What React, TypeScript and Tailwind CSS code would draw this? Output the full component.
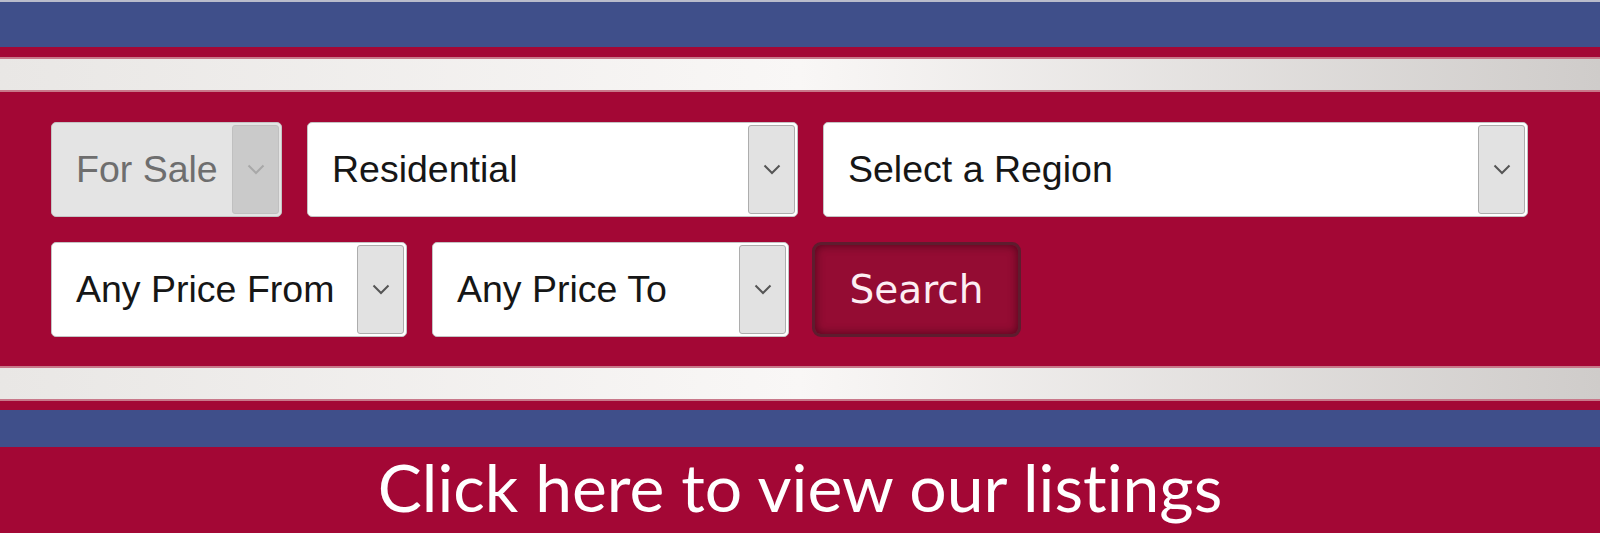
import React from "react";

function Chevron({ color = "#555" }: { color?: string }) {
  return (
    <svg width="18" height="11" viewBox="0 0 18 11" fill="none">
      <polyline points="1.5,1.5 9,9 16.5,1.5" stroke={color} strokeWidth="2" />
    </svg>
  );
}

function Stripe() {
  return (
    <div className="h-[35px] border-y-2 border-[#c8788a] bg-gradient-to-r from-[#e9e7e5] via-[#f9f7f6] to-[#cfccca]" />
  );
}

type SelectProps = {
  label: string;
  width: string;
  disabled?: boolean;
};

function FakeSelect({ label, width, disabled }: SelectProps) {
  return (
    <div
      className={`${width} h-[95px] flex items-stretch rounded-[5px] border border-[#c4c4c4] p-[2px] ${
        disabled ? "bg-[#e4e4e4]" : "bg-white"
      }`}
    >
      <div
        className={`flex-1 flex items-center pl-[22px] text-[37.5px] leading-none ${
          disabled ? "text-[#6e6e6e]" : "text-[#161616]"
        }`}
        style={{ fontFamily: '"Liberation Sans", Arial, sans-serif' }}
      >
        {label}
      </div>
      <div
        className={`w-[47px] flex items-center justify-center rounded-[3px] border ${
          disabled ? "bg-[#cacaca] border-[#c0c0c0]" : "bg-[#e2e2e2] border-[#adadad]"
        }`}
      >
        <Chevron color={disabled ? "#a8a8a8" : "#555"} />
      </div>
    </div>
  );
}

export default function App() {
  return (
    <div className="w-[1600px] h-[533px] bg-[#a30735] flex flex-col overflow-hidden">
      {/* top band */}
      <div className="h-[2px] bg-[#b9bccb]" />
      <div className="h-[45px] bg-[#3f4f8a]" />
      <div className="h-[10px] bg-[#a30735]" />
      <Stripe />

      {/* search form */}
      <div className="h-[274px] pl-[51px] pt-[30px] flex flex-col gap-[25px]">
        <div className="flex gap-[25px]">
          <FakeSelect label="For Sale" width="w-[231px]" disabled />
          <FakeSelect label="Residential" width="w-[491px]" />
          <FakeSelect label="Select a Region" width="w-[705px]" />
        </div>
        <div className="flex gap-[25px]">
          <FakeSelect label="Any Price From" width="w-[356px]" />
          <FakeSelect label="Any Price To" width="w-[357px]" />
          <button
            className="-ml-[2px] w-[209px] h-[95px] rounded-[9px] border-[3px] border-[#5e1c2e] bg-[#940c33] shadow-[inset_0_0_10px_rgba(50,0,15,0.7)] text-[39px] text-[#fdeef3] leading-none"
            style={{ fontFamily: '"DejaVu Sans", Verdana, sans-serif' }}
          >
            Search
          </button>
        </div>
      </div>

      <Stripe />
      <div className="h-[9px] bg-[#a30735]" />
      <div className="h-[37px] bg-[#3f4f8a]" />

      {/* call to action */}
      <div className="flex-1 flex items-center justify-center pb-[6px]">
        <span
          className="text-white text-[66px] leading-none [font-variant-ligatures:none]"
          style={{ fontFamily: 'Lato, "Open Sans", sans-serif' }}
        >
          Click here to view our listings
        </span>
      </div>
    </div>
  );
}
